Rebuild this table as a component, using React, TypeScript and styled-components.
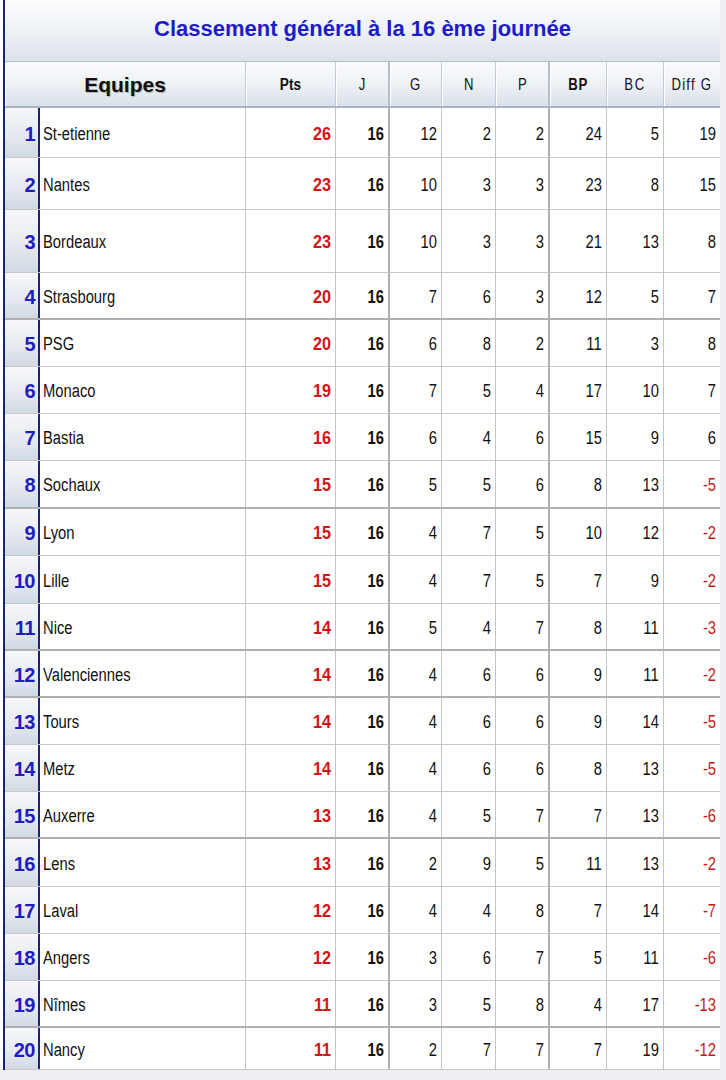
import React from 'react';
import styled, { createGlobalStyle, css } from 'styled-components';

const GlobalStyle = createGlobalStyle`
  html, body {
    margin: 0;
    padding: 0;
    background: #ffffff;
  }
  body {
    font-family: 'Liberation Sans', Arial, sans-serif;
  }
`;

const COLS = '35px 206px 90px 54px 52px 54px 54px 57px 57px 56px';

type Team = [number, string, number, number, number, number, number, number, number, number];

const teams: Team[] = [
  [1, 'St-etienne', 26, 16, 12, 2, 2, 24, 5, 19],
  [2, 'Nantes', 23, 16, 10, 3, 3, 23, 8, 15],
  [3, 'Bordeaux', 23, 16, 10, 3, 3, 21, 13, 8],
  [4, 'Strasbourg', 20, 16, 7, 6, 3, 12, 5, 7],
  [5, 'PSG', 20, 16, 6, 8, 2, 11, 3, 8],
  [6, 'Monaco', 19, 16, 7, 5, 4, 17, 10, 7],
  [7, 'Bastia', 16, 16, 6, 4, 6, 15, 9, 6],
  [8, 'Sochaux', 15, 16, 5, 5, 6, 8, 13, -5],
  [9, 'Lyon', 15, 16, 4, 7, 5, 10, 12, -2],
  [10, 'Lille', 15, 16, 4, 7, 5, 7, 9, -2],
  [11, 'Nice', 14, 16, 5, 4, 7, 8, 11, -3],
  [12, 'Valenciennes', 14, 16, 4, 6, 6, 9, 11, -2],
  [13, 'Tours', 14, 16, 4, 6, 6, 9, 14, -5],
  [14, 'Metz', 14, 16, 4, 6, 6, 8, 13, -5],
  [15, 'Auxerre', 13, 16, 4, 5, 7, 7, 13, -6],
  [16, 'Lens', 13, 16, 2, 9, 5, 11, 13, -2],
  [17, 'Laval', 12, 16, 4, 4, 8, 7, 14, -7],
  [18, 'Angers', 12, 16, 3, 6, 7, 5, 11, -6],
  [19, 'Nîmes', 11, 16, 3, 5, 8, 4, 17, -13],
  [20, 'Nancy', 11, 16, 2, 7, 7, 7, 19, -12],
];

// row heights (incl. bottom rule) and which rows close a group with a heavier rule
const heights = [50, 52, 63, 47, 47, 47, 47, 48, 47, 48, 47, 47, 47, 47, 47, 48, 47, 47, 47, 42];
const heavy = [4, 8, 11, 12, 15, 19];

const Page = styled.div`
  display: flex;
  min-height: 1080px;
  padding-left: 3px;
  background: linear-gradient(to bottom, transparent 1069px, #eceef2 1069px);
`;

const Frame = styled.div`
  width: 715px;
  border-left: 2px solid #1b2378;
  display: flex;
  flex-direction: column;
  align-self: flex-start;
  background: #fff;
`;

const Side = styled.div`
  flex: 1;
  background: #eceef2;
`;

const Title = styled.div`
  height: 62px;
  box-sizing: border-box;
  border-bottom: 1px solid #b7c1ce;
  background: linear-gradient(to bottom, #fdfdfe 0%, #eef1f5 50%, #dce2eb 100%);
  display: flex;
  align-items: center;
  justify-content: center;
  padding-bottom: 3px;
  font-size: 22px;
  font-weight: 700;
  color: #1c1cc8;
`;

const HeadRow = styled.div`
  display: grid;
  grid-template-columns: ${COLS};
  height: 46px;
  box-sizing: border-box;
  border-bottom: 2px solid #aab4c3;
  background: linear-gradient(to bottom, #fafbfd 0%, #eef1f6 50%, #d9e0ea 100%);
`;

const HeadCell = styled.div<{ $span?: number; $bold?: boolean; $big?: boolean; $thick?: boolean }>`
  grid-column: span ${(p) => p.$span ?? 1};
  display: flex;
  align-items: center;
  justify-content: center;
  padding-top: 2px;
  border-right: ${(p) => (p.$thick ? '2px solid #b4bdca' : '1px solid #c2cad6')};
  box-shadow: inset 1px 0 0 #ffffff;
  font-size: ${(p) => (p.$big ? 21 : 16)}px;
  font-weight: ${(p) => (p.$bold ? 700 : 400)};
  color: #111;
  text-shadow: ${(p) => (p.$big ? '1px 1px 1px rgba(0,0,0,0.25)' : 'none')};
  &:last-child {
    border-right: none;
  }
`;

// the sheet uses a tall, narrow face: squeeze Liberation Sans horizontally
const Squeeze = styled.span<{ $origin?: 'left' | 'right' | 'center'; $ratio?: number; $gap?: number }>`
  display: inline-block;
  white-space: nowrap;
  transform: scaleX(${(p) => p.$ratio ?? 0.82});
  transform-origin: ${(p) => p.$origin ?? 'right'} center;
  letter-spacing: ${(p) => p.$gap ?? 0}px;
`;

const Row = styled.div<{ $h: number; $heavy: boolean }>`
  display: grid;
  grid-template-columns: ${COLS};
  height: ${(p) => p.$h}px;
  box-sizing: border-box;
  ${(p) =>
    p.$heavy
      ? css`
          border-bottom: 2px solid #b0b0b0;
        `
      : css`
          border-bottom: 1px solid #c8c8c8;
        `}
`;

const Rank = styled.div`
  display: flex;
  align-items: center;
  justify-content: flex-end;
  padding: 3px 3px 0 0;
  border-right: 2px solid #1b2378;
  background: linear-gradient(to bottom, #f6f7fa 0%, #e6eaf0 55%, #d2d9e4 100%);
  font-size: 20px;
  font-weight: 700;
  color: #1d1dc0;
  letter-spacing: -0.5px;
`;

const Name = styled.div`
  display: flex;
  align-items: center;
  padding: 3px 0 0 3px;
  border-right: 1px solid #c4c4c4;
  font-size: 18px;
  color: #111;
  overflow: hidden;
`;

const Num = styled.div<{ $tone?: 'red' | 'pts'; $bold?: boolean; $thick?: boolean }>`
  display: flex;
  align-items: center;
  justify-content: flex-end;
  padding: 3px 4px 0 0;
  border-right: ${(p) => (p.$thick ? '2px solid #b0b0b0' : '1px solid #c4c4c4')};
  font-size: 18px;
  font-weight: ${(p) => (p.$bold ? 700 : 400)};
  color: ${(p) => (p.$tone === 'pts' ? '#d41414' : p.$tone === 'red' ? '#c41a1a' : '#111')};
  &:last-child {
    border-right: none;
  }
`;

export default function App() {
  return (
    <>
      <GlobalStyle />
      <Page>
        <Frame>
          <Title>Classement général à la 16 ème journée</Title>
          <HeadRow>
            <HeadCell $span={2} $bold $big>
              Equipes
            </HeadCell>
            <HeadCell $bold>
              <Squeeze $origin="center" $ratio={0.85}>Pts</Squeeze>
            </HeadCell>
            <HeadCell $thick>
              <Squeeze $origin="center">J</Squeeze>
            </HeadCell>
            <HeadCell>
              <Squeeze $origin="center">G</Squeeze>
            </HeadCell>
            <HeadCell>
              <Squeeze $origin="center">N</Squeeze>
            </HeadCell>
            <HeadCell $thick>
              <Squeeze $origin="center">P</Squeeze>
            </HeadCell>
            <HeadCell $bold>
              <Squeeze $origin="center" $gap={1}>BP</Squeeze>
            </HeadCell>
            <HeadCell>
              <Squeeze $origin="center" $gap={2}>BC</Squeeze>
            </HeadCell>
            <HeadCell>
              <Squeeze $origin="center" $gap={1.5}>Diff G</Squeeze>
            </HeadCell>
          </HeadRow>
          {teams.map((t, i) => {
            const [rank, name, pts, j, g, n, p, bp, bc, diff] = t;
            return (
              <Row key={rank} $h={heights[i]} $heavy={heavy.includes(rank)}>
                <Rank>{rank}</Rank>
                <Name>
                  <Squeeze $origin="left">{name}</Squeeze>
                </Name>
                <Num $tone="pts" $bold>
                  <Squeeze $ratio={0.9}>{pts}</Squeeze>
                </Num>
                <Num $bold $thick>
                  <Squeeze>{j}</Squeeze>
                </Num>
                <Num>
                  <Squeeze>{g}</Squeeze>
                </Num>
                <Num>
                  <Squeeze>{n}</Squeeze>
                </Num>
                <Num $thick>
                  <Squeeze>{p}</Squeeze>
                </Num>
                <Num>
                  <Squeeze>{bp}</Squeeze>
                </Num>
                <Num>
                  <Squeeze>{bc}</Squeeze>
                </Num>
                <Num $tone={diff < 0 ? 'red' : undefined}>
                  <Squeeze>{diff}</Squeeze>
                </Num>
              </Row>
            );
          })}
        </Frame>
        <Side />
      </Page>
    </>
  );
}
